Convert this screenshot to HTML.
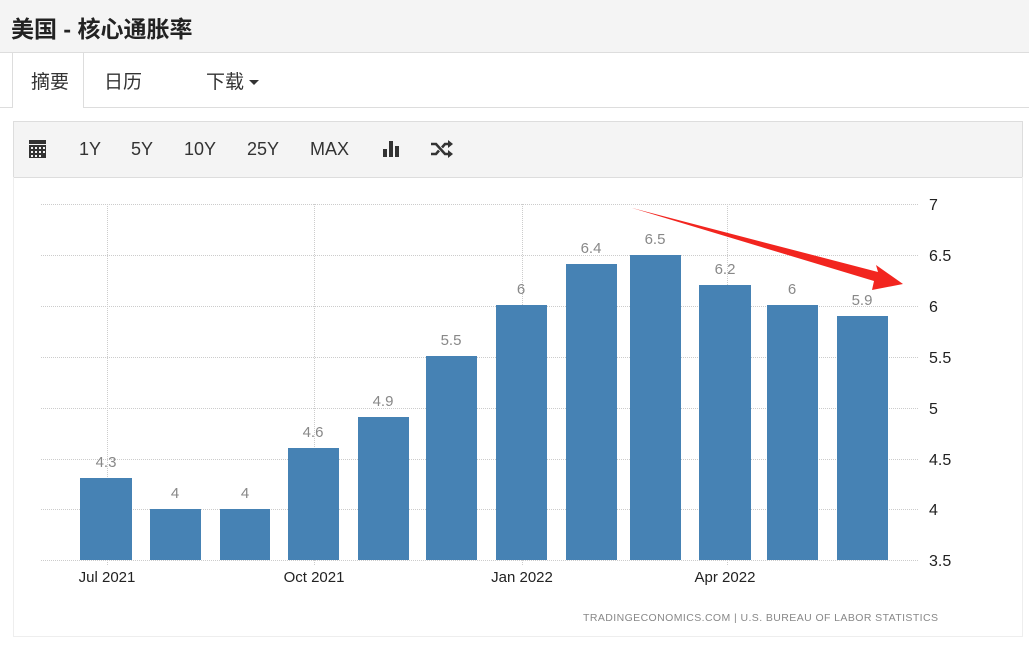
<!DOCTYPE html>
<html><head><meta charset="utf-8"><style>
*{margin:0;padding:0;box-sizing:border-box}
body{width:1029px;height:650px;background:#fff;font-family:"Liberation Sans","Noto Sans CJK SC",sans-serif;position:relative;overflow:hidden;color:#333}
.hdr{position:absolute;left:0;top:0;width:1029px;height:53px;background:#f4f4f4;border-bottom:1px solid #ddd}
.hdr h1{position:absolute;left:11px;top:10px;font-size:23px;font-weight:bold;color:#222}
.tabs{position:absolute;left:0;top:53px;width:1029px;height:55px;border-bottom:1px solid #ddd}
.tab{position:absolute;top:14px;font-size:19px;color:#333}
.act{position:absolute;left:12px;top:0;width:72px;height:55px;border-left:1px solid #ddd;border-right:1px solid #ddd;background:#fff}
.tb{position:absolute;left:13px;top:121px;width:1010px;height:57px;background:#f4f4f4;border:1px solid #ddd}
.tb span{position:absolute;top:17px;font-size:18px;color:#333}
.box{position:absolute;left:13px;top:177px;width:1010px;height:460px;border:1px solid #eee;border-top:none}
</style></head><body>
<div class="hdr"><h1>美国 - 核心通胀率</h1></div>
<div class="tabs">
<div class="act"></div>
<div class="tab" style="left:31px">摘要</div>
<div class="tab" style="left:104px">日历</div>
<div class="tab" style="left:206px">下载 <span style="display:inline-block;width:0;height:0;border-left:5px solid transparent;border-right:5px solid transparent;border-top:5px solid #333;vertical-align:middle"></span></div>
</div>
<div class="tb">
<svg style="position:absolute;left:14px;top:18px" width="20" height="18" viewBox="0 0 20 18"><rect x="1" y="0" width="17" height="4" fill="#333"/><rect x="1" y="5" width="17" height="13" fill="#333"/><g fill="#f4f4f4"><rect x="3" y="7" width="2" height="2"/><rect x="7" y="7" width="2" height="2"/><rect x="11" y="7" width="2" height="2"/><rect x="15" y="7" width="2" height="2"/><rect x="3" y="11" width="2" height="2"/><rect x="7" y="11" width="2" height="2"/><rect x="11" y="11" width="2" height="2"/><rect x="15" y="11" width="2" height="2"/><rect x="3" y="15" width="2" height="2"/><rect x="7" y="15" width="2" height="2"/><rect x="11" y="15" width="2" height="2"/></g></svg>
<span style="left:65px">1Y</span><span style="left:117px">5Y</span><span style="left:170px">10Y</span><span style="left:233px">25Y</span><span style="left:296px">MAX</span>
<svg style="position:absolute;left:368px;top:18px" width="20" height="18"><rect x="1" y="9" width="4" height="8" fill="#333"/><rect x="7" y="1" width="4" height="16" fill="#333"/><rect x="13" y="6" width="4" height="11" fill="#333"/></svg>
<svg style="position:absolute;left:416px;top:18px" width="24" height="18" viewBox="0 0 24 18"><path d="M1 4h5l9 10h4M1 14h5l3-3.5M12 7.5l3-3.5h4" stroke="#333" stroke-width="2.6" fill="none"/><path d="M18 0l5 4-5 4zM18 10l5 4-5 4z" fill="#333"/></svg>
</div>
<div class="box"></div>
<svg style="position:absolute;left:0;top:0" width="1029" height="650">
<g stroke="#ccc" stroke-width="1" stroke-dasharray="1,1">
<line x1="41" y1="204.5" x2="918" y2="204.5"/><line x1="41" y1="255.5" x2="918" y2="255.5"/><line x1="41" y1="306.5" x2="918" y2="306.5"/><line x1="41" y1="357.5" x2="918" y2="357.5"/><line x1="41" y1="408.5" x2="918" y2="408.5"/><line x1="41" y1="459.5" x2="918" y2="459.5"/><line x1="41" y1="509.5" x2="918" y2="509.5"/><line x1="41" y1="560.5" x2="918" y2="560.5"/>
<line x1="107.5" y1="204" x2="107.5" y2="566"/><line x1="314.5" y1="204" x2="314.5" y2="566"/><line x1="522.5" y1="204" x2="522.5" y2="566"/><line x1="727.5" y1="204" x2="727.5" y2="566"/>
</g>
<g fill="#4682b4">
<rect x="80" y="478" width="52" height="82"/><rect x="150" y="509" width="51" height="51"/><rect x="220" y="509" width="50" height="51"/><rect x="288" y="448" width="51" height="112"/><rect x="358" y="417" width="51" height="143"/><rect x="426" y="356" width="51" height="204"/><rect x="496" y="305" width="51" height="255"/><rect x="566" y="264" width="51" height="296"/><rect x="630" y="255" width="51" height="305"/><rect x="699" y="285" width="52" height="275"/><rect x="767" y="305" width="51" height="255"/><rect x="837" y="316" width="51" height="244"/>
</g>
<g font-family="'Liberation Sans',sans-serif" font-size="15" fill="#888" text-anchor="middle">
<text x="106" y="467">4.3</text><text x="175" y="498">4</text><text x="245" y="498">4</text><text x="313" y="437">4.6</text><text x="383" y="406">4.9</text><text x="451" y="345">5.5</text><text x="521" y="294">6</text><text x="591" y="253">6.4</text><text x="655" y="244">6.5</text><text x="725" y="274">6.2</text><text x="792" y="294">6</text><text x="862" y="305">5.9</text>
</g>
<g font-family="'Liberation Sans',sans-serif" font-size="16" fill="#222">
<text x="929" y="210">7</text><text x="929" y="261">6.5</text><text x="929" y="312">6</text><text x="929" y="363">5.5</text><text x="929" y="414">5</text><text x="929" y="465">4.5</text><text x="929" y="515">4</text><text x="929" y="566">3.5</text>
<g text-anchor="middle" font-size="15"><text x="107" y="582">Jul 2021</text><text x="314" y="582">Oct 2021</text><text x="522" y="582">Jan 2022</text><text x="725" y="582">Apr 2022</text></g>
</g>
<text x="583" y="621" textLength="355" lengthAdjust="spacing" font-family="'Liberation Sans',sans-serif" font-size="10.5" fill="#888">TRADINGECONOMICS.COM | U.S. BUREAU OF LABOR STATISTICS</text>
<path d="M632 208L878 272L876 265L903 284L872 290L874 281Z" fill="#f2251f"/>
</svg>
</body></html>
